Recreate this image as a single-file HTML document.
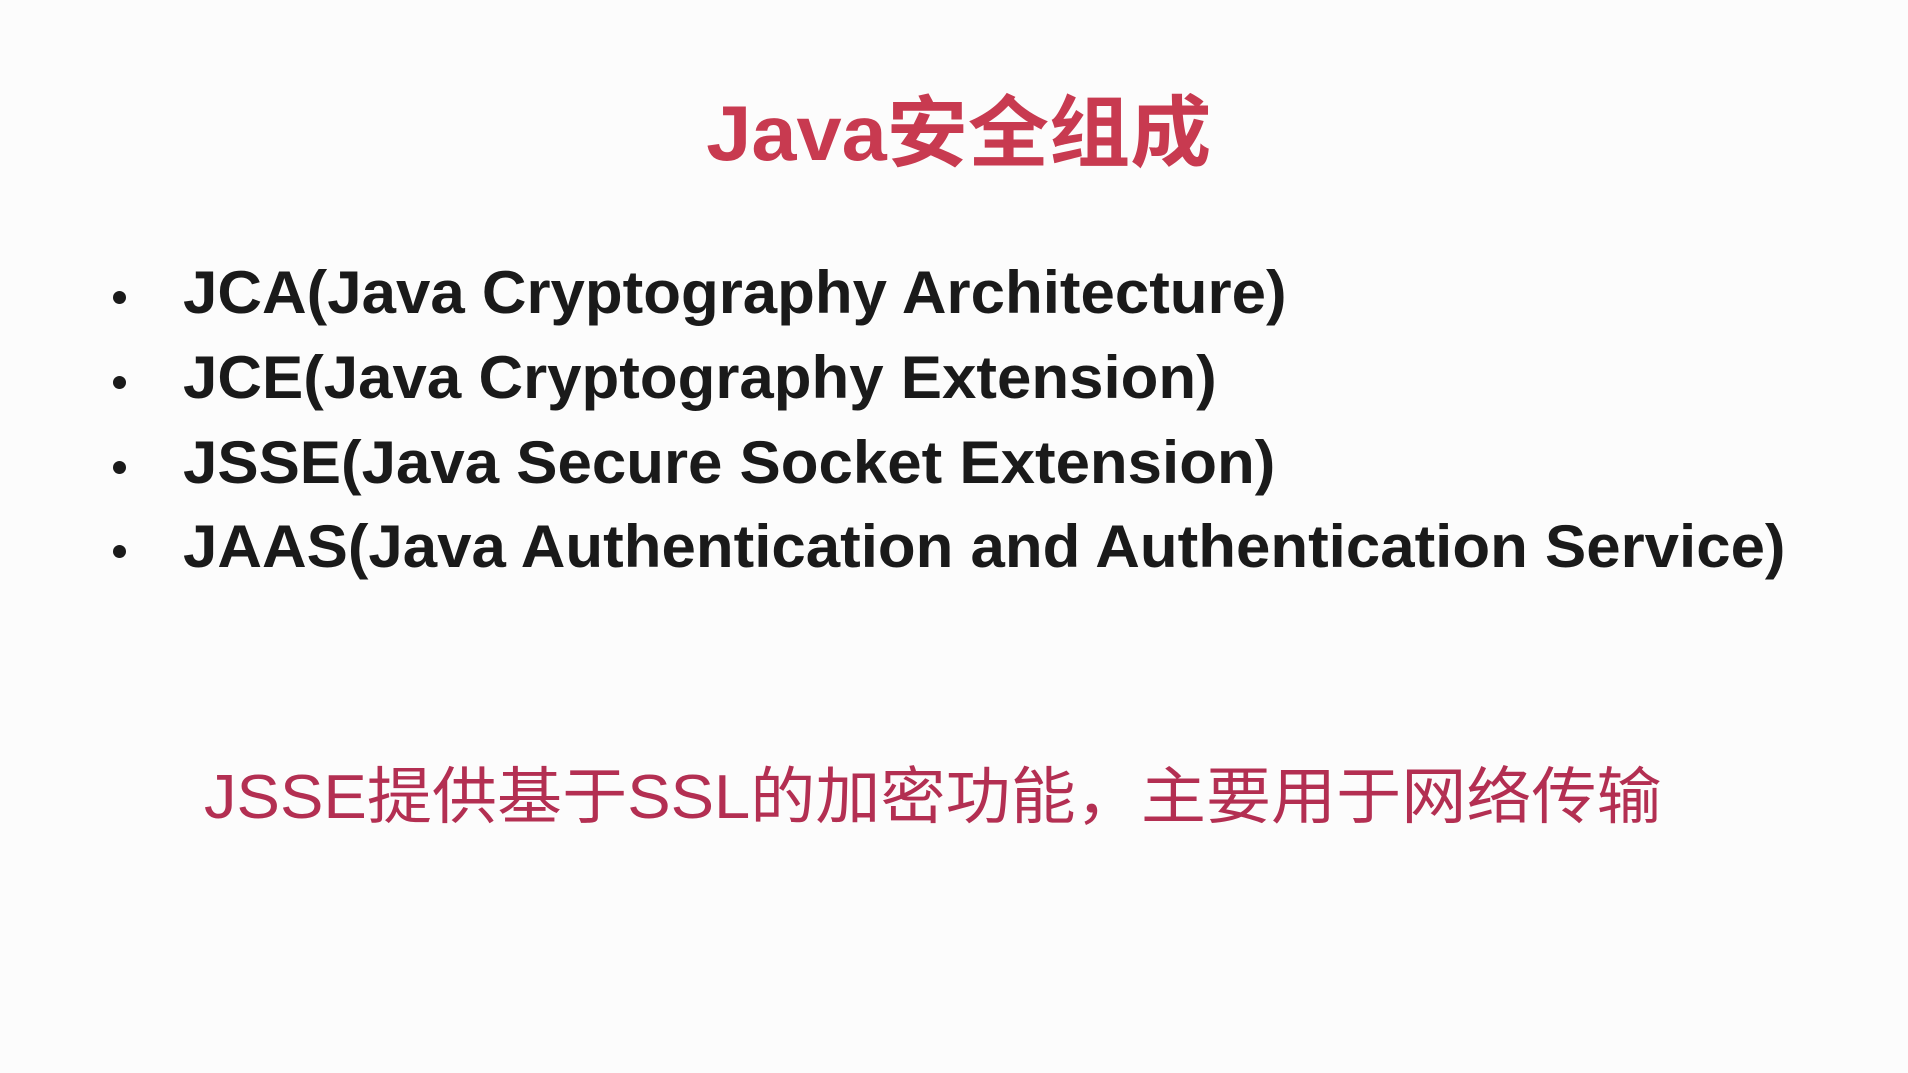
<!DOCTYPE html>
<html><head><meta charset="utf-8"><style>
html,body{margin:0;padding:0;background:#fcfcfc;width:1908px;height:1073px;overflow:hidden}
.t{position:absolute;left:0;width:1908px;top:71px;text-align:center;font:bold 78px "Liberation Sans","Noto Sans CJK SC",sans-serif;color:#c83a50;white-space:nowrap}
.t span{display:inline-block;transform:scaleX(1.04);margin-left:10px}
.li{position:absolute;left:183px;font:bold 60px "Liberation Sans",sans-serif;color:#1a1a1a;white-space:nowrap;transform-origin:left center;transform:scaleX(1.03)}
.dot{position:absolute;left:113px;width:13px;height:13px;border-radius:50%;background:#1a1a1a}
.b{position:absolute;left:204px;top:746px;font:62px "Liberation Sans","Noto Sans CJK SC",sans-serif;color:#b32f52;white-space:nowrap;transform-origin:left center;transform:scaleX(1.05)}
</style></head><body>
<div class="t"><span>Java安全组成</span></div>
<div class="dot" style="top:291px"></div><div class="li" style="top:258px">JCA(Java Cryptography Architecture)</div>
<div class="dot" style="top:376px"></div><div class="li" style="top:343px">JCE(Java Cryptography Extension)</div>
<div class="dot" style="top:461px"></div><div class="li" style="top:428px">JSSE(Java Secure Socket Extension)</div>
<div class="dot" style="top:545px"></div><div class="li" style="top:512px">JAAS(Java Authentication and Authentication Service)</div>
<div class="b">JSSE提供基于SSL的加密功能，主要用于网络传输</div>
</body></html>
